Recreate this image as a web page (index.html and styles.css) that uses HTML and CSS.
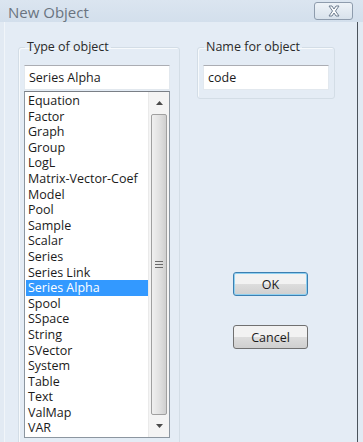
FILE: index.html
```html
<!DOCTYPE html>
<html lang="en">
<head>
    <meta charset="UTF-8">
    <title>New Object</title>
    <link rel="stylesheet" href="styles.css">
</head>
<body>

    <div class="window">
        <div class="titlebar">
            <span class="title">New Object</span>
            <div class="close">
                <svg width="16" height="12" viewBox="0 0 16 12">
                    <path d="M3 1 L6 1 L8 4 L10 1 L13 1 L9.5 6 L13 11 L10 11 L8 8 L6 11 L3 11 L6.5 6 Z" fill="#fbfcfd" stroke="#6f7f91" stroke-width="1"/>
                </svg>
            </div>
        </div>

        <div class="client">
            <!-- Left group: type list -->
            <fieldset class="group group-type">
                <legend>Type of object</legend>
                <div class="field">Series Alpha</div>
                <div class="listbox">
                    <ul class="items">
                        <li>Equation</li>
                        <li>Factor</li>
                        <li>Graph</li>
                        <li>Group</li>
                        <li>LogL</li>
                        <li>Matrix-Vector-Coef</li>
                        <li>Model</li>
                        <li>Pool</li>
                        <li>Sample</li>
                        <li>Scalar</li>
                        <li>Series</li>
                        <li>Series Link</li>
                        <li class="selected">Series Alpha</li>
                        <li>Spool</li>
                        <li>SSpace</li>
                        <li>String</li>
                        <li>SVector</li>
                        <li>System</li>
                        <li>Table</li>
                        <li>Text</li>
                        <li>ValMap</li>
                        <li>VAR</li>
                    </ul>
                    <div class="scrollbar">
                        <div class="arrow">
                            <svg width="7" height="4" viewBox="0 0 7 4"><path d="M0 4 L3.5 0 L7 4 Z" fill="#4a4a4a"/></svg>
                        </div>
                        <div class="thumb">
                            <svg width="8" height="7" viewBox="0 0 8 7">
                                <path d="M0 0.5 H8 M0 3.5 H8 M0 6.5 H8" stroke="#6a6a6a" stroke-width="1"/>
                            </svg>
                        </div>
                        <div class="arrow">
                            <svg width="7" height="4" viewBox="0 0 7 4"><path d="M0 0 L7 0 L3.5 4 Z" fill="#4a4a4a"/></svg>
                        </div>
                    </div>
                </div>
            </fieldset>

            <!-- Right column: name and buttons -->
            <div class="side">
                <fieldset class="group group-name">
                    <legend>Name for object</legend>
                    <div class="field">code</div>
                </fieldset>

                <div class="buttons">
                    <button class="btn btn-default">OK</button>
                    <button class="btn">Cancel</button>
                </div>
            </div>
        </div>
    </div>

</body>
</html>
```

FILE: styles.css
```css
body {
    margin: 0;
    font-family: "Open Sans", "Liberation Sans", sans-serif;
    font-size: 12.5px;
    color: #1b1b1b;
    background: #e2eaf3;
}

.window {
    width: 363px;
    height: 442px;
    display: flex;
    flex-direction: column;
    overflow: hidden;
}

.titlebar {
    height: 28px;
    display: flex;
    justify-content: space-between;
    align-items: flex-start;
    padding: 2px 10px 0 8px;
    box-sizing: border-box;
    background: linear-gradient(#dbe5f0, #d3dfec);
}

.title {
    font-size: 15px;
    line-height: 20px;
    color: #6a7480;
}

.close {
    width: 37px;
    height: 16px;
    border: 1px solid #8e9cad;
    border-radius: 3px;
    background: linear-gradient(#eef3f8, #d8e2ec);
    display: flex;
    justify-content: center;
    align-items: center;
}

.client {
    flex: 1;
    display: flex;
    gap: 17px;
    padding: 17px 0 0 13px;
    width: 339px;
    margin-left: 4px;
    border-right: 1px solid #4b535c;
    border-left: 1px solid #f1f5f9;
    background: #e4ecf5;
}

.group {
    margin: 0;
    border: 1px solid #d3dde6;
    border-radius: 3px;
    box-shadow: inset 1px 1px 0 #f7fafc;
    padding: 10px 9px 8px 5px;
}

.group legend {
    padding: 0 2px;
    line-height: 16px;
    color: #2a2a2a;
    margin-left: 1px;
}

.group-type {
    width: 146px;
    height: 402px;
    padding-bottom: 0;
}

.group-name {
    width: 126px;
    padding-right: 5px;
}

.field {
    height: 23px;
    line-height: 23px;
    padding-left: 4px;
    background: #ffffff;
    border: 1px solid #e2e8ee;
    border-top-color: #abadb3;
}

.group-type .field {
    width: 140px;
}

.group-name .field {
    width: 120px;
}

.listbox {
    margin-top: 1px;
    width: 144px;
    height: 345px;
    display: flex;
    background: #ffffff;
    border: 1px solid #8c96a0;
    border-top-color: #7a7f86;
}

.items {
    list-style: none;
    margin: 0;
    padding: 1px 0 0 1px;
    flex: 1;
}

.items li {
    height: 15.6px;
    line-height: 15.6px;
    padding-left: 2px;
    white-space: nowrap;
}

.items li.selected {
    background: #3399ff;
    color: #ffffff;
}

.scrollbar {
    width: 20px;
    display: flex;
    flex-direction: column;
    background: #f4f4f4;
    border-left: 1px solid #eaeaea;
}

.arrow {
    height: 22px;
    display: flex;
    justify-content: center;
    align-items: center;
}

.thumb {
    flex: 1;
    margin: 0 2px;
    border: 1px solid #a0a0a0;
    border-radius: 2px;
    background: linear-gradient(to right, #f0f0f0, #e2e2e2 50%, #cfcfcf);
    display: flex;
    justify-content: center;
    align-items: center;
}

.side {
    display: flex;
    flex-direction: column;
}

.buttons {
    display: flex;
    flex-direction: column;
    gap: 29px;
    margin: 173px 0 0 36px;
}

.btn {
    width: 75px;
    height: 24px;
    padding: 0;
    font-family: inherit;
    font-size: 12.5px;
    color: #1b1b1b;
    border: 1px solid #707070;
    border-radius: 3px;
    background: linear-gradient(#f2f2f2 50%, #dddddd 50%, #cfcfcf);
}

.btn-default {
    border-color: #3c7fb1;
    box-shadow: inset 0 0 0 1px #8fd0f0;
}
```
